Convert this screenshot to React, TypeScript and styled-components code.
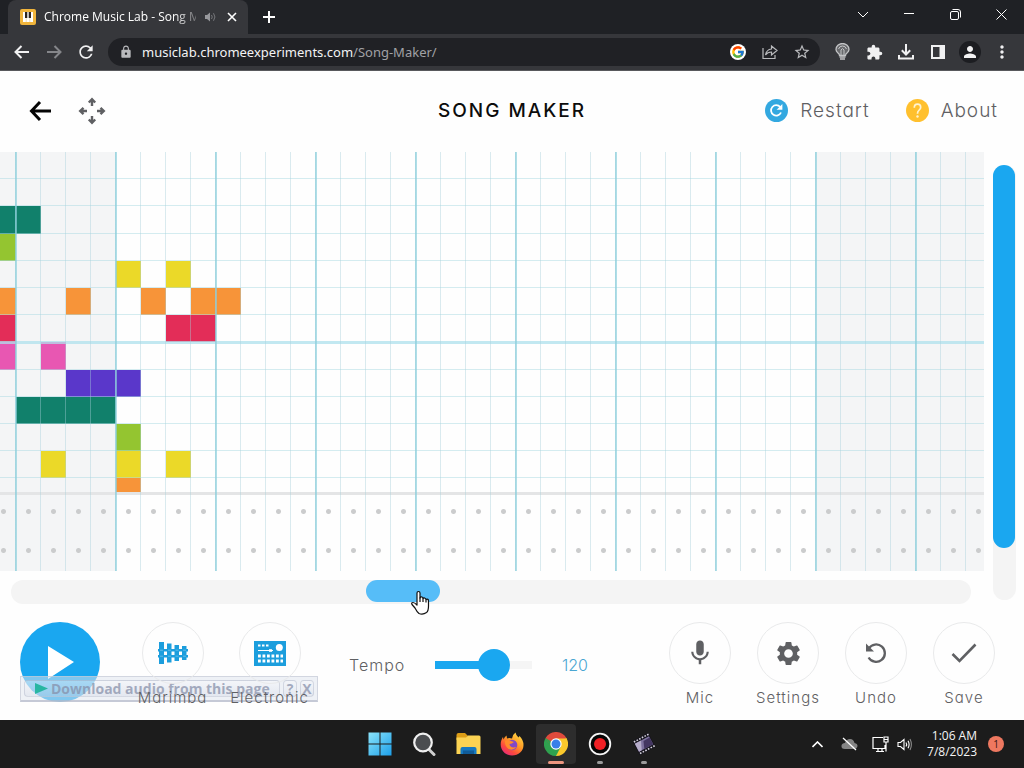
import React, { useState } from "react";
import styled, { createGlobalStyle } from "styled-components";
import { MdExtension, MdLock, MdStarBorder, MdSettings, MdMic, MdPerson, MdMoreVert, MdRefresh } from "react-icons/md";
import { FcGoogle } from "react-icons/fc";

const BLUE = "#1aa7f0";
const GREY = "#5f6063";

const Global = createGlobalStyle`
  * { box-sizing: border-box; }
  body { margin: 0; background: #fefefe; }
  button { border: 0; padding: 0; margin: 0; background: none; font: inherit; color: inherit; cursor: pointer; }
  svg { display: block; flex: none; }
`;

const Screen = styled.div`
  display: flex;
  flex-direction: column;
  min-height: 100vh;
  font-family: Inter, "Liberation Sans", sans-serif;
  color: ${GREY};
  overflow: hidden;
`;

/* ---------- browser frame ---------- */

const TabStrip = styled.div`
  display: flex;
  align-items: flex-start;
  height: 34px;
  padding-left: 8px;
  background: #1f2125;
  color: #fff;
  font-family: "Open Sans", "Noto Sans", sans-serif;
`;

const Tab = styled.div`
  display: flex;
  align-items: center;
  width: 240px;
  height: 34px;
  padding: 0 9px 0 12px;
  border-radius: 8px 8px 0 0;
  background: #36373b;
`;

const TabTitle = styled.span`
  width: 152px;
  margin-left: 8px;
  overflow: hidden;
  white-space: nowrap;
  font-size: 12px;
  line-height: 16px;
  mask-image: linear-gradient(to right, #000 130px, transparent 160px);
`;

const TabIcon = styled.button<{ $gap?: number }>`
  display: flex;
  margin-left: ${(p) => p.$gap ?? 0}px;
`;

const NewTab = styled.button`
  display: grid;
  place-items: center;
  width: 42px;
  height: 34px;
`;

const WindowButtons = styled.div`
  display: flex;
  margin-left: auto;
`;

const WindowButton = styled.button`
  display: grid;
  place-items: center;
  width: 46px;
  height: 28px;
`;

const Toolbar = styled.div`
  display: flex;
  align-items: center;
  height: 37px;
  padding: 0 6px;
  border-bottom: 1px solid #58595c;
  background: #36373b;
  color: #f1f1f2;
`;

const ToolButton = styled.button<{ $dim?: boolean }>`
  display: grid;
  place-items: center;
  width: 32px;
  height: 32px;
  color: ${(p) => (p.$dim ? "#85868a" : "inherit")};
`;

const Avatar = styled.span`
  display: grid;
  place-items: center;
  width: 22px;
  height: 22px;
  border-radius: 50%;
  background: #1c1d21;
`;

const AddressBar = styled.form`
  display: flex;
  align-items: center;
  flex: 1;
  height: 28px;
  margin: 0 6px;
  padding: 0 2px 0 11px;
  border-radius: 14px;
  background: #202125;
  color: #b9babd;
`;

const Address = styled.a`
  flex: 1;
  margin-left: 9px;
  color: #a0a1a5;
  font: 13px/20px "Noto Sans", "Open Sans", sans-serif;
  text-decoration: none;
  white-space: nowrap;
  b { color: #f3f3f4; font-weight: 400; }
`;

/* ---------- application ---------- */

const Header = styled.header`
  display: grid;
  grid-template-columns: 1fr auto 1fr;
  align-items: center;
  height: 81px;
  padding: 0 26px 2px;
  background: #fefefe;
`;

const HeaderGroup = styled.div<{ $end?: boolean }>`
  display: flex;
  align-items: center;
  gap: ${(p) => (p.$end ? 36 : 24)}px;
  justify-content: ${(p) => (p.$end ? "flex-end" : "flex-start")};
`;

const Title = styled.h1`
  margin: 0;
  color: #0c0c0c;
  font-size: 19px;
  line-height: 24px;
  font-weight: 500;
  letter-spacing: 2px;
`;

const TextButton = styled.button`
  display: flex;
  align-items: center;
  gap: 12px;
  font-size: 19px;
  font-weight: 300;
  line-height: 24px;
  letter-spacing: 1px;
  font-feature-settings: "cv11";
`;

const Workspace = styled.main`
  position: relative;
  z-index: 1;
  display: grid;
  grid-template-columns: minmax(0, 1fr) 40px;
  grid-template-rows: 1fr auto;
  flex: 1;
  min-height: 452px;
`;

const Roll = styled.section`
  position: relative;
  display: flex;
  flex-direction: column;
  overflow: hidden;
  background: linear-gradient(to right, #f4f5f6 116px, #fefefe 116px 816px, #f4f5f6 816px);
  &::after {
    content: "";
    position: absolute;
    inset: 0;
    pointer-events: none;
    background:
      linear-gradient(to right, #8ccfdcb0 2px, transparent 2px) 15px 0 / 100px 100%,
      linear-gradient(to right, #a6cfda68 1px, transparent 1px) 15px 0 / 25px 100%;
  }
`;

const Melody = styled.div`
  display: grid;
  grid-template-columns: 16px repeat(38, 25px);
  grid-template-rows: repeat(12, 2fr) 1fr;
  flex: 1;
`;

const Note = styled.button<{ $row: number; $col: number; $color: string }>`
  grid-row: ${(p) => p.$row};
  grid-column: ${(p) => p.$col};
  background: ${(p) => p.$color};
`;

const PitchLine = styled.div<{ $row: number }>`
  grid-row: ${(p) => p.$row};
  grid-column: 1 / -1;
  width: 100vw;
  border-bottom: ${(p) => (p.$row === 7 ? "3px solid #aee0ecc0" : "1px solid #addbe385")};
  margin-bottom: ${(p) => (p.$row === 7 ? -2 : 0)}px;
  pointer-events: none;
`;

const Percussion = styled.div`
  height: 79px;
  border-top: 3px solid #e4e5e6;
  background: radial-gradient(circle, #cbcccd 2px, transparent 3px) 16px -3px / 25px 39px;
`;

const HorizontalTrack = styled.div`
  height: 24px;
  margin: 9px 13px 0 11px;
  border-radius: 12px;
  background: #f4f4f4;
`;

const HorizontalThumb = styled.div`
  position: relative;
  width: 74px;
  height: 22px;
  margin-left: 37%;
  border-radius: 11px;
  background: #56bdf8;
`;

const Pointer = styled.svg`
  position: absolute;
  left: 44px;
  top: 10px;
`;

const VerticalTrack = styled.div`
  grid-column: 2;
  grid-row: 1 / 3;
  width: 23px;
  margin: 13px 0 4px 9px;
  border-radius: 12px;
  background: #f4f4f4;
`;

const VerticalThumb = styled.div`
  width: 22px;
  height: 88%;
  border-radius: 11px;
  background: ${BLUE};
`;

const Controls = styled.footer`
  position: relative;
  display: flex;
  align-items: flex-start;
  height: 116px;
  padding: 18px 16px 0 20px;
`;

const PlayButton = styled.button`
  display: grid;
  place-items: center;
  width: 80px;
  height: 80px;
  margin-right: 24px;
  border-radius: 50%;
  background: ${BLUE};
`;

const Tool = styled.button<{ $wide?: boolean }>`
  position: relative;
  z-index: 1;
  display: flex;
  flex-direction: column;
  align-items: center;
  gap: 4px;
  width: ${(p) => (p.$wide ? 97 : 88)}px;
  font-size: 15px;
  font-weight: 300;
  line-height: 20px;
  letter-spacing: 1px;
  font-feature-settings: "cv11";
`;

const Disc = styled.span`
  display: grid;
  place-items: center;
  width: 62px;
  height: 62px;
  border: 1px solid #e9eaeb;
  border-radius: 50%;
`;

const TempoGroup = styled.div`
  display: flex;
  align-items: center;
  flex: 1;
  height: 86px;
  padding-left: 31px;
  font-size: 16px;
  font-weight: 300;
  line-height: 20px;
  letter-spacing: 1px;
`;

const TempoLabel = styled.label`
  width: 86px;
`;

const TempoSlider = styled.input`
  appearance: none;
  width: 97px;
  height: 32px;
  margin: 0 30px 0 0;
  background: linear-gradient(to right, ${BLUE} 60%, #f5f5f5 60%) center / 100% 8px no-repeat;
  border-radius: 4px;
  &::-webkit-slider-runnable-track { height: 32px; }
  &::-webkit-slider-thumb {
    appearance: none;
    width: 32px;
    height: 32px;
    border-radius: 50%;
    background: ${BLUE};
  }
`;

const TempoValue = styled.output`
  color: #4ba6d2;
  letter-spacing: 0;
`;

const DownloadBar = styled.aside`
  position: absolute;
  left: 20px;
  bottom: 18px;
  display: flex;
  gap: 3px;
  width: 298px;
  height: 26px;
  padding: 3px;
  border: 1px solid #c4c9d6a8;
  border-bottom: 2px solid #b3b8c8b0;
  background: #dfe4ed85;
  color: #858ea8b8;
`;

const DownloadButton = styled.button<{ $grow?: boolean }>`
  display: flex;
  align-items: center;
  justify-content: ${(p) => (p.$grow ? "flex-start" : "center")};
  flex: ${(p) => (p.$grow ? "1" : "0 0 14px")};
  gap: 3px;
  padding-left: ${(p) => (p.$grow ? 10 : 0)}px;
  border: 1px solid #aeb5c770;
  border-radius: 4px;
  background: linear-gradient(#ffffff50, #cfd5e250);
  font: 700 14px/18px "Open Sans", "Liberation Sans", sans-serif;
  white-space: nowrap;
`;

/* ---------- desktop taskbar ---------- */

const Taskbar = styled.nav`
  display: grid;
  grid-template-columns: 1fr auto 1fr;
  align-items: center;
  height: 48px;
  padding: 0 20px;
  background: #1c1c1c;
  color: #f5f5f5;
  font-family: "Open Sans", "Noto Sans", sans-serif;
`;

const Apps = styled.div`
  display: flex;
  grid-column: 2;
  gap: 4px;
`;

const AppButton = styled.button<{ $active?: boolean; $running?: boolean }>`
  display: grid;
  place-items: center;
  position: relative;
  width: 40px;
  height: 40px;
  border-radius: 4px;
  background: ${(p) => (p.$active ? "#2d2d2d" : "transparent")};
  &::after {
    content: "";
    position: absolute;
    bottom: 0;
    width: ${(p) => (p.$active ? 16 : p.$running ? 6 : 0)}px;
    height: 3px;
    border-radius: 2px;
    background: ${(p) => (p.$active ? "#ee9680" : "#9b9b9b")};
  }
`;

const Tray = styled.div`
  display: flex;
  align-items: center;
  justify-content: flex-end;
`;

const TrayButton = styled.button<{ $w: number }>`
  display: grid;
  place-items: center;
  width: ${(p) => p.$w}px;
  height: 32px;
`;

const Clock = styled.time`
  margin: 0 11px 0 14px;
  text-align: right;
  font-size: 12px;
  line-height: 16px;
`;

const Badge = styled.span`
  display: grid;
  place-items: center;
  width: 16px;
  height: 16px;
  border-radius: 50%;
  background: #ee7860;
  color: #3a1713;
  font-size: 10px;
  line-height: 16px;
`;

const TEAL = "#11806b";
const GREEN = "#94c530";
const YELLOW = "#ebd928";
const ORANGE = "#f79439";
const RED = "#e32d58";
const PINK = "#e857b2";
const PURPLE = "#5a37ca";

const melody: { row: number; color: string; cols: number[] }[] = [
  { row: 3, color: TEAL, cols: [1, 2] },
  { row: 4, color: GREEN, cols: [1] },
  { row: 5, color: YELLOW, cols: [6, 8] },
  { row: 6, color: ORANGE, cols: [1, 4, 7, 9, 10] },
  { row: 7, color: RED, cols: [1, 8, 9] },
  { row: 8, color: PINK, cols: [1, 3] },
  { row: 9, color: PURPLE, cols: [4, 5, 6] },
  { row: 10, color: TEAL, cols: [2, 3, 4, 5] },
  { row: 11, color: GREEN, cols: [6] },
  { row: 12, color: YELLOW, cols: [3, 6, 8] },
  { row: 13, color: ORANGE, cols: [6] },
];

const pitchRows = Array.from({ length: 12 }, (_, i) => i + 1);

const Arrow = ({ size = 16, flip = false, width = 2 }: { size?: number; flip?: boolean; width?: number }) => (
  <svg width={size} height={size} viewBox="0 0 16 16" fill="none" stroke="currentColor" strokeWidth={width}>
    <path d={flip ? "M1 8H14M8.500 2L14.500 8L8.500 14" : "M15 8H2M7.500 2L1.500 8L7.500 14"} />
  </svg>
);

const Piano = () => (
  <svg width="16" height="16" viewBox="0 0 16 16">
    <rect width="16" height="16" rx="2" fill="#f0b43c" />
    <path d="M3 3H13V13H3Z" fill="#fff" />
    <path d="M5 3H7.300V9H5ZM8.700 3H11V9H8.700Z" fill="#2b2320" />
    <path d="M6.200 9V13M9.800 9V13" stroke="#e5c98b" strokeWidth=".6" />
  </svg>
);

const Speaker = () => (
  <svg width="11" height="10" viewBox="0 0 11 10" fill="none" stroke="#77787c">
    <path d="M0 3H2L5 .5V9.500L2 7H0Z" fill="#97989c" stroke="none" />
    <path d="M6.500 3Q8 5 6.500 7M8.500 1.200Q11.400 5 8.500 8.800" />
  </svg>
);

const Share = () => (
  <svg width="16" height="16" viewBox="0 0 16 16" fill="none" stroke="currentColor" strokeWidth="1.200">
    <path d="M1 4V14.500H13V11M9.500 5V2L15 6.500L9.500 11V8Q5.500 8 3.500 11Q4.500 5.500 9.500 5Z" />
  </svg>
);

const Bulb = () => (
  <svg width="15" height="18" viewBox="0 0 15 18" fill="none" stroke="#c3c4c6">
    <path d="M4.500 12.500Q4.500 11 3 10Q1 8.200 1 6.500A6.500 6 0 0 1 14 6.500Q14 8.200 12 10Q10.500 11 10.500 12.500Z" fill="#696a6d" strokeWidth="1.300" />
    <path d="M6 12V7Q7.500 4 9 7V12M3.500 6Q4.500 3 7.500 3Q10.500 3 11.500 6" />
    <path d="M4.500 14H10.500M5 16H10" strokeWidth="1.600" />
  </svg>
);

const Download = () => (
  <svg width="18" height="18" viewBox="0 0 18 18" fill="none" stroke="currentColor" strokeWidth="2">
    <path d="M9 1V11M4.800 7.300L9 11.500L13.200 7.300M2 12V15.500H16V12" />
  </svg>
);

const MoveArrows = () => (
  <svg width="28" height="28" viewBox="0 0 28 28" fill="none" stroke={GREY} strokeWidth="2.400">
    <path d="M14 9V2.500M10.800 5.500L14 2.200L17.200 5.500M14 19V25.500M10.800 22.500L14 25.800L17.200 22.500M9 14H2.500M5.500 10.800L2.200 14L5.500 17.200M19 14H25.500M22.500 10.800L25.800 14L22.500 17.200" />
  </svg>
);

const RestartIcon = () => (
  <svg width="23" height="23" viewBox="0 0 23 23" fill="none">
    <circle cx="11.500" cy="11.500" r="11.500" fill="#33a8e0" />
    <path d="M16 13.500A5.200 5.200 0 1 1 15.200 8" stroke="#fff" strokeWidth="1.800" />
    <path d="M17.400 5V10.800H11.600Z" fill="#fff" />
  </svg>
);

const HelpIcon = () => (
  <svg width="23" height="23" viewBox="0 0 23 23" fill="none">
    <circle cx="11.500" cy="11.500" r="11.500" fill="#ffc02e" />
    <path d="M8.300 8.800Q8.300 5.200 11.500 5.200Q14.700 5.200 14.700 8.300Q14.700 10.200 12.900 11.400Q11.500 12.400 11.500 14.800" stroke="#fff3d1" strokeWidth="1.700" />
    <circle cx="11.500" cy="17.500" r="1.200" fill="#fff3d1" />
  </svg>
);

const MarimbaIcon = () => (
  <svg width="30" height="22" viewBox="0 0 30 22" fill="#1c9edd">
    <path d="M1 0H6V22H1ZM9 1.500H13.500V20.500H9ZM16.500 3H21V19H16.500ZM24 4H28.500V18H24Z" />
    <path d="M0 7H30V9.500H0ZM0 13H30V15.500H0Z" />
    <path d="M2 8.200H5M10 8.200H13M17.500 8.200H20.500M25 8.200H28M2 14.200H5M10 14.200H13M17.500 14.200H20.500M25 14.200H28" stroke="#7fc9ec" strokeWidth=".7" />
  </svg>
);

const ElectronicIcon = () => (
  <svg width="32" height="25" viewBox="0 0 32 25">
    <rect width="32" height="25" fill="#1c9edd" />
    <circle cx="25.300" cy="6.500" r="3.500" fill="#fff" />
    <g stroke="#fff" fill="none">
      <path d="M4 4.500H15" strokeWidth="2" strokeDasharray="2.500 1.500" />
      <path d="M4 9.500H19" strokeWidth="1" />
      <path d="M15 9.500H18" strokeWidth="2.600" />
      <path d="M4 15H29M4 20H29" strokeWidth="3" strokeDasharray="2.800 1.700" />
    </g>
  </svg>
);

const UndoIcon = () => (
  <svg width="22" height="22" viewBox="0 0 22 22" fill="none">
    <path d="M3.800 6.500A8.700 8.700 0 1 1 3.600 15.500" stroke={GREY} strokeWidth="2.300" />
    <path d="M1 1.500V9.500H9Z" fill={GREY} />
  </svg>
);

const SaveIcon = () => (
  <svg width="26" height="20" viewBox="0 0 26 20" fill="none" stroke={GREY} strokeWidth="2.600">
    <path d="M1.500 11L8.500 18L24.500 1.500" />
  </svg>
);

const WindowsLogo = () => (
  <svg width="24" height="24" viewBox="0 0 24 24">
    <defs>
      <linearGradient id="win" x1="0" y1="0" x2="1" y2="1">
        <stop stopColor="#8be4fb" />
        <stop offset="1" stopColor="#1d9fe9" />
      </linearGradient>
    </defs>
    <path d="M.5 .5H11.500V11.500H.5ZM12.500 .5H23.500V11.500H12.500ZM.5 12.500H11.500V23.500H.5ZM12.500 12.500H23.500V23.500H12.500Z" fill="url(#win)" />
  </svg>
);

const SearchLogo = () => (
  <svg width="24" height="24" viewBox="0 0 24 24" fill="none">
    <path d="M16.500 17L22 22.500" stroke="#d0d0d0" strokeWidth="3" strokeLinecap="round" />
    <circle cx="11" cy="10.500" r="8.800" fill="#4b4d50" stroke="#efefef" strokeWidth="2.200" />
  </svg>
);

const FolderLogo = () => (
  <svg width="25" height="24" viewBox="0 0 25 24">
    <path d="M.5 3Q.5 1 2.500 1H9L11.500 3.500V8H.5Z" fill="#dc9d16" />
    <path d="M.5 5.500H10L12 3.500H23Q24.500 3.500 24.500 5V22H.5Z" fill="#fbd353" />
    <path d="M4.500 22V17Q4.500 15 6.500 15H18.500Q20.500 15 20.500 17V22Z" fill="#1679c0" />
    <path d="M7 18.500H18V22H7Z" fill="#105b98" />
  </svg>
);

const FirefoxLogo = () => (
  <svg width="24" height="24" viewBox="0 0 24 24">
    <defs>
      <linearGradient id="fox" x1=".9" y1="0" x2=".2" y2="1">
        <stop stopColor="#ffe24a" />
        <stop offset=".45" stopColor="#ff9a25" />
        <stop offset=".75" stopColor="#fb483f" />
        <stop offset="1" stopColor="#e32781" />
      </linearGradient>
    </defs>
    <path d="M12 23.500C5.500 23.500 .7 18.500 .7 12.500C.7 9.500 1.600 7 3 5L3.500 7.500Q4.500 5 6.500 3.500L7 6.500Q9 5.500 12 6.500Q12.500 2.500 15.500 .5Q16 3.500 18.500 5.500L19.500 4Q23.500 8 23.500 13C23.500 19 18.500 23.500 12 23.500Z" fill="url(#fox)" />
    <circle cx="12" cy="13" r="5.300" fill="#8148c7" />
    <path d="M5 9Q8 7 11 9L14 10Q12 12 9.500 12Q10 16.500 16.500 15Q13 19 8.500 17Q4.500 14 5 9Z" fill="#ff8b2b" />
  </svg>
);

const ChromeLogo = () => (
  <svg width="24" height="24" viewBox="0 0 24 24">
    <path d="M12 12L1.600 6A12 12 0 0 1 22.400 6Z" fill="#df4a3c" />
    <path d="M12 12L22.400 6A12 12 0 0 1 12 24Z" fill="#fbc92c" />
    <path d="M12 12V24A12 12 0 0 1 1.600 6Z" fill="#2fa14f" />
    <path d="M12 6.500H22.700L17 14.500Z" fill="#fbc92c" />
    <path d="M16.800 14.700L12 24L8 16Z" fill="#2fa14f" />
    <path d="M7.200 14.800L1.600 6L12 6.500Z" fill="#df4a3c" />
    <path d="M1.600 6L7.200 15.500L11 16L6.500 9Z" fill="#2fa14f" />
    <circle cx="12" cy="12" r="5.700" fill="#fff" />
    <circle cx="12" cy="12" r="4.500" fill="#397fe8" />
  </svg>
);

const RecordLogo = () => (
  <svg width="24" height="24" viewBox="0 0 24 24">
    <circle cx="12" cy="12" r="10.300" fill="#060606" stroke="#f5f5f5" strokeWidth="1.800" />
    <circle cx="12" cy="12" r="6" fill="#f02025" />
  </svg>
);

const FilmLogo = () => (
  <svg width="22" height="22" viewBox="0 0 22 22">
    <g transform="rotate(-28 11 11)">
      <rect x="2" y="3" width="18" height="16" fill="#16141d" />
      <path d="M3 4.500H20M3 17.500H20" stroke="#d4d2dc" strokeWidth="1.600" strokeDasharray="1.600 1.400" />
      <rect x="3" y="6.500" width="16" height="9" fill="#7d729e" />
      <path d="M3 6.500H10L6 15.500H3Z" fill="#b5acc9" />
      <path d="M12 8H19V15.500H9Z" fill="#443761" />
    </g>
  </svg>
);

export default function App() {
  const [tempo, setTempo] = useState(120);
  return (
    <Screen>
      <Global />
      <TabStrip>
        <Tab>
          <Piano />
          <TabTitle>Chrome Music Lab - Song Maker</TabTitle>
          <TabIcon aria-label="Mute tab" $gap={9}><Speaker /></TabIcon>
          <TabIcon aria-label="Close tab" $gap={11}>
            <svg width="10" height="10" viewBox="0 0 10 10" stroke="#fff" strokeWidth="1.600"><path d="M1 1L9 9M9 1L1 9" /></svg>
          </TabIcon>
        </Tab>
        <NewTab aria-label="New tab">
          <svg width="12" height="12" viewBox="0 0 12 12" stroke="#fff" strokeWidth="2"><path d="M6 0V12M0 6H12" /></svg>
        </NewTab>
        <WindowButtons>
          <WindowButton aria-label="Search tabs">
            <svg width="10" height="7" viewBox="0 0 10 7" fill="none" stroke="#fff"><path d="M0 1L5 6L10 1" /></svg>
          </WindowButton>
          <WindowButton aria-label="Minimize">
            <svg width="10" height="2" viewBox="0 0 10 2"><path d="M0 0H10V1H0Z" fill="#fff" /></svg>
          </WindowButton>
          <WindowButton aria-label="Restore">
            <svg width="11" height="11" viewBox="0 0 11 11" fill="none" stroke="#fff"><rect x=".5" y="2.500" width="8" height="8" rx="1.500" /><path d="M2.500 .5H8Q10.500 .5 10.500 3V8.500" /></svg>
          </WindowButton>
          <WindowButton aria-label="Close">
            <svg width="11" height="11" viewBox="0 0 11 11" stroke="#fff"><path d="M.5 .5L10.500 10.500M10.500 .5L.5 10.500" /></svg>
          </WindowButton>
        </WindowButtons>
      </TabStrip>
      <Toolbar>
        <ToolButton aria-label="Back"><Arrow /></ToolButton>
        <ToolButton aria-label="Forward" $dim><Arrow flip /></ToolButton>
        <ToolButton aria-label="Reload"><MdRefresh size={20} /></ToolButton>
        <AddressBar>
          <MdLock size={14} />
          <Address href="#address"><b>musiclab.chromeexperiments.com</b>/Song-Maker/</Address>
          <ToolButton type="button" aria-label="Google search">
            <svg width="16" height="16" viewBox="0 0 16 16"><circle cx="8" cy="8" r="8" fill="#fff" /><FcGoogle x={1} y={1} size={14} /></svg>
          </ToolButton>
          <ToolButton type="button" aria-label="Share"><Share /></ToolButton>
          <ToolButton type="button" aria-label="Bookmark"><MdStarBorder size={18} /></ToolButton>
        </AddressBar>
        <ToolButton aria-label="Hints"><Bulb /></ToolButton>
        <ToolButton aria-label="Extensions"><MdExtension size={17} /></ToolButton>
        <ToolButton aria-label="Downloads"><Download /></ToolButton>
        <ToolButton aria-label="Side panel">
          <svg width="14" height="14" viewBox="0 0 14 14"><path d="M0 0H14V14H0ZM2 2V12H8.500V2Z" fill="currentColor" fillRule="evenodd" /></svg>
        </ToolButton>
        <ToolButton aria-label="Profile"><Avatar><MdPerson size={18} /></Avatar></ToolButton>
        <ToolButton aria-label="Menu"><MdMoreVert size={20} /></ToolButton>
      </Toolbar>

      <Header>
        <HeaderGroup>
          <TextButton aria-label="Back to experiments">
            <svg width="28" height="22" viewBox="0 0 28 22" fill="none" stroke="#050505" strokeWidth="3"><path d="M25 11H6M14 2L5.500 11L14 20" /></svg>
          </TextButton>
          <TextButton aria-label="Pan grid"><MoveArrows /></TextButton>
        </HeaderGroup>
        <Title>SONG MAKER</Title>
        <HeaderGroup $end>
          <TextButton><RestartIcon />Restart</TextButton>
          <TextButton><HelpIcon />About</TextButton>
        </HeaderGroup>
      </Header>

      <Workspace>
        <Roll aria-label="Song grid">
          <Melody>
            {melody.flatMap(({ row, color, cols }) =>
              cols.map((col) => <Note key={`${row}-${col}`} $row={row} $col={col} $color={color} aria-label={`Note ${row}, ${col}`} />)
            )}
            {pitchRows.map((row) => <PitchLine key={row} $row={row} />)}
          </Melody>
          <Percussion />
        </Roll>
        <VerticalTrack><VerticalThumb /></VerticalTrack>
        <HorizontalTrack>
          <HorizontalThumb>
            <Pointer width="20" height="26" viewBox="0 0 20 26" fill="#fff" stroke="#111" strokeWidth="1.200" strokeLinejoin="round">
              <path d="M7 15V3Q7 1.500 8.500 1.500Q10 1.500 10 3V8Q10.500 6.500 12 7Q13 7.400 13 8.500Q14 7.500 15 8.200Q16 8.700 16 9.500Q18.500 8.500 18.500 11V16Q18.500 21 16.500 22.500Q13 25 9 23.500Q7 22 5 18L2 14.500Q1 12.500 3 12.500Q4.500 12.500 7 15Z" />
              <path d="M10 7.500V12M13 8.500V12M16 9.500V12.500" />
            </Pointer>
          </HorizontalThumb>
        </HorizontalTrack>
      </Workspace>

      <Controls>
        <PlayButton aria-label="Play">
          <svg width="28" height="36" viewBox="0 0 28 36"><path d="M2 2L28 18L2 35Z" fill="#fff" /></svg>
        </PlayButton>
        <Tool $wide><Disc><MarimbaIcon /></Disc>Marimba</Tool>
        <Tool $wide><Disc><ElectronicIcon /></Disc>Electronic</Tool>
        <TempoGroup>
          <TempoLabel htmlFor="tempo">Tempo</TempoLabel>
          <TempoSlider id="tempo" type="range" min={40} max={160} value={tempo} onChange={(e) => setTempo(Number(e.target.value))} />
          <TempoValue htmlFor="tempo">{tempo}</TempoValue>
        </TempoGroup>
        <Tool><Disc><MdMic size={30} /></Disc>Mic</Tool>
        <Tool><Disc><MdSettings size={29} /></Disc>Settings</Tool>
        <Tool><Disc><UndoIcon /></Disc>Undo</Tool>
        <Tool><Disc><SaveIcon /></Disc>Save</Tool>
        <DownloadBar>
          <DownloadButton $grow>
            <svg width="13" height="11" viewBox="0 0 13 11"><path d="M0 0L13 5.500L0 11Z" fill="#28b6a2" /></svg>
            Download audio from this page
          </DownloadButton>
          <DownloadButton>?</DownloadButton>
          <DownloadButton>X</DownloadButton>
        </DownloadBar>
      </Controls>

      <Taskbar>
        <Apps>
          <AppButton aria-label="Start"><WindowsLogo /></AppButton>
          <AppButton aria-label="Search"><SearchLogo /></AppButton>
          <AppButton aria-label="Files"><FolderLogo /></AppButton>
          <AppButton aria-label="Firefox"><FirefoxLogo /></AppButton>
          <AppButton aria-label="Chrome" $active><ChromeLogo /></AppButton>
          <AppButton aria-label="Recorder" $running><RecordLogo /></AppButton>
          <AppButton aria-label="Video editor" $running><FilmLogo /></AppButton>
        </Apps>
        <Tray>
          <TrayButton $w={32} aria-label="Hidden icons">
            <svg width="11" height="7" viewBox="0 0 11 7" fill="none" stroke="#fff" strokeWidth="1.600"><path d="M.5 6L5.500 1L10.500 6" /></svg>
          </TrayButton>
          <TrayButton $w={32} aria-label="Cloud offline">
            <svg width="17" height="14" viewBox="0 0 17 14"><path d="M4 12Q0 12 .5 8.500Q1 6 4 6Q5.500 2 9 2Q12.500 2 13.500 6Q16.500 6.500 16.500 9Q16 12 13 12Z" fill="#858585" /><path d="M2 1L15 13" stroke="#fff" strokeWidth="1.300" /></svg>
          </TrayButton>
          <TrayButton $w={30} aria-label="Network">
            <svg width="17" height="17" viewBox="0 0 17 17" fill="none" stroke="#fff" strokeWidth="1.200"><path d="M11 1.500H1V12.500H13V9M4 15.500H12M6 13V15.500M10 13V15.500M12 1H16V6H12ZM14 6V15.500M12 3.500H16" /></svg>
          </TrayButton>
          <TrayButton $w={18} aria-label="Volume">
            <svg width="15" height="13" viewBox="0 0 15 13" fill="none" stroke="#fff" strokeWidth="1.100"><path d="M1 4.500H3.500L7 1.500V11.500L3.500 8.500H1ZM9 4.500Q10.300 6.500 9 8.500M11 2.800Q13.200 6.500 11 10.200" /><path d="M13 1Q15.800 6.500 13 12" stroke="#8a8a8a" /></svg>
          </TrayButton>
          <Clock>1:06 AM<br />7/8/2023</Clock>
          <Badge>1</Badge>
        </Tray>
      </Taskbar>
    </Screen>
  );
}
